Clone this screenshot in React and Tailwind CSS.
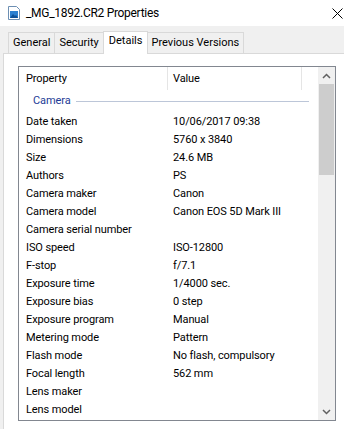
import React from 'react';

const rows = [
  ['Date taken', '10/06/2017 09:38'],
  ['Dimensions', '5760 x 3840'],
  ['Size', '24.6 MB'],
  ['Authors', 'PS'],
  ['Camera maker', 'Canon'],
  ['Camera model', 'Canon EOS 5D Mark III'],
  ['Camera serial number', ''],
  ['ISO speed', 'ISO-12800'],
  ['F-stop', 'f/7.1'],
  ['Exposure time', '1/4000 sec.'],
  ['Exposure bias', '0 step'],
  ['Exposure program', 'Manual'],
  ['Metering mode', 'Pattern'],
  ['Flash mode', 'No flash, compulsory'],
  ['Focal length', '562 mm'],
  ['Lens maker', ''],
  ['Lens model', ''],
];

const tabs = ['General', 'Security', 'Details', 'Previous Versions'];

const FileIcon = () => (
  <svg width="12" height="14" viewBox="0 0 12 14">
    <path d="M0.5 0.5h8l3 3v10h-11z" fill="#fff" stroke="#6d8fb3" />
    <rect x="2" y="5" width="8" height="7" fill="#2a7fd0" />
    <path d="M2 12l3-4 2 2 1-1 2 3z" fill="#0c4f96" />
  </svg>
);

const App = () => {
  return (
    <div
      className="w-[344px] h-[429px] overflow-hidden bg-[#f0f0f0] text-black relative"
      style={{ fontFamily: 'Roboto, "Liberation Sans", Arial, sans-serif' }}
    >
      {/* Title bar */}
      <div className="h-[26px] bg-white flex items-center">
        <div className="ml-[8px] w-[12px] flex">
          <FileIcon />
        </div>
        <span className="ml-[6px] text-[12px] tracking-[-0.3px] leading-none">_MG_1892.CR2 Properties</span>
        <svg className="ml-auto mr-[1px]" width="11" height="11" viewBox="0 0 11 11">
          <path d="M0.5 0.5l10 10M10.5 0.5l-10 10" stroke="#000" strokeWidth="1" />
        </svg>
      </div>

      {/* Tabs */}
      <div className="flex items-end pl-[8px] pt-[4px] h-[27px]">
        {tabs.map((t) => {
          const active = t === 'Details';
          return (
            <div
              key={t}
              className={
                active
                  ? 'h-[23px] px-[5px] -mx-[1px] relative z-10 bg-white border border-b-0 border-[#d9d9d9] flex items-center text-[11px] -mb-[1px]'
                  : 'h-[21px] px-[4px] bg-[#f0f0f0] border border-b-0 border-[#d9d9d9] -ml-[1px] first:ml-0 flex items-center text-[11px]'
              }
            >
              <span className={active ? 'pb-[3px]' : ''}>{t}</span>
            </div>
          );
        })}
      </div>

      {/* Panel */}
      <div className="ml-[3px] h-[400px] bg-white border-t border-l border-[#d9d9d9] pt-[12px] pl-[14px]">
        <div className="w-[318px] h-[355px] border border-[#828790] flex bg-white">
          <div className="flex-1 min-w-0 text-[11px] tracking-[-0.1px]">
            {/* Header */}
            <div className="h-[23px] flex items-center relative">
              <div className="w-[148px] pl-[7px] pt-[2px]">Property</div>
              <div className="w-[1px] h-full bg-[#e5e5e5]" />
              <div className="w-[133px] pl-[5px] pt-[2px]">Value</div>
              <div className="w-[1px] h-full bg-[#e5e5e5]" />
            </div>
            {/* Group */}
            <div className="h-[22px] flex items-center pl-[14px] pr-[9px] pt-[1px]">
              <span className="text-[#1e3c96]">Camera</span>
              <div className="flex-1 h-[1px] bg-[#bcc6d8] ml-[5px]" />
            </div>
            {/* Rows */}
            {rows.map(([k, v]) => (
              <div key={k} className="h-[18px] flex items-center whitespace-nowrap pt-[2px]">
                <div className="w-[149px] pl-[7px]">{k}</div>
                <div className="pl-[5px]">{v}</div>
              </div>
            ))}
          </div>

          {/* Scrollbar */}
          <div className="w-[17px] h-full bg-[#f0f0f0] flex flex-col">
            <div className="h-[17px] flex items-center justify-center">
              <svg width="9" height="6" viewBox="0 0 9 6">
                <path d="M1 5l3.5-3.5L8 5" fill="none" stroke="#606060" strokeWidth="1.5" />
              </svg>
            </div>
            <div className="mx-[1px] h-[91px] bg-[#cdcdcd]" />
            <div className="flex-1" />
            <div className="h-[17px] flex items-center justify-center">
              <svg width="9" height="6" viewBox="0 0 9 6">
                <path d="M1 1l3.5 3.5L8 1" fill="none" stroke="#606060" strokeWidth="1.5" />
              </svg>
            </div>
          </div>
        </div>
      </div>
    </div>
  );
};

export default App;
